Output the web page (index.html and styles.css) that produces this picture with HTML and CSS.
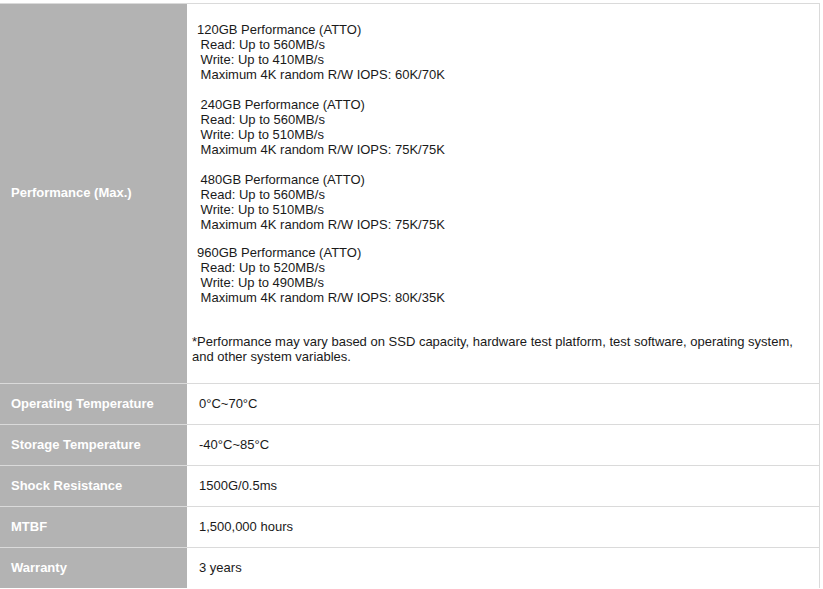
FILE: index.html
```html
<!DOCTYPE html>
<html>
<head>
<meta charset="utf-8">
<title>Specifications</title>
<link rel="stylesheet" href="styles.css">
</head>
<body>
<table class="spec">
  <tr class="perf-row">
    <th class="label">Performance (Max.)</th>
    <td class="perf">
      <div class="group">120GB Performance (ATTO)<br>&nbsp;Read: Up to 560MB/s<br>&nbsp;Write: Up to 410MB/s<br>&nbsp;Maximum 4K random R/W IOPS: 60K/70K</div>
      <div class="group g2">&nbsp;240GB Performance (ATTO)<br>&nbsp;Read: Up to 560MB/s<br>&nbsp;Write: Up to 510MB/s<br>&nbsp;Maximum 4K random R/W IOPS: 75K/75K</div>
      <div class="group g3">&nbsp;480GB Performance (ATTO)<br>&nbsp;Read: Up to 560MB/s<br>&nbsp;Write: Up to 510MB/s<br>&nbsp;Maximum 4K random R/W IOPS: 75K/75K</div>
      <div class="group g4">960GB Performance (ATTO)<br>&nbsp;Read: Up to 520MB/s<br>&nbsp;Write: Up to 490MB/s<br>&nbsp;Maximum 4K random R/W IOPS: 80K/35K</div>
      <p class="note">*Performance may vary based on SSD capacity, hardware test platform, test software, operating system, and other system variables.</p>
    </td>
  </tr>
  <tr>
    <th class="label">Operating Temperature</th>
    <td class="value">0°C~70°C</td>
  </tr>
  <tr>
    <th class="label">Storage Temperature</th>
    <td class="value">-40°C~85°C</td>
  </tr>
  <tr>
    <th class="label">Shock Resistance</th>
    <td class="value">1500G/0.5ms</td>
  </tr>
  <tr>
    <th class="label">MTBF</th>
    <td class="value">1,500,000 hours</td>
  </tr>
  <tr>
    <th class="label">Warranty</th>
    <td class="value">3 years</td>
  </tr>
</table>
</body>
</html>
```
FILE: styles.css
```css
html, body {
  margin: 0;
  padding: 0;
  background: #ffffff;
}

body {
  font-family: "Liberation Sans", Arial, sans-serif;
  font-size: 13px;
  line-height: 15px;
  color: #1a1a1a;
}

.spec {
  margin-top: 3px;
  width: 820px;
  border-collapse: collapse;
  border-right: 1px solid #dadada;
  table-layout: fixed;
}

.spec tr {
  border-top: 1px solid #dadada;
}

.spec .label {
  width: 187px;
  box-sizing: border-box;
  background: #b3b3b3;
  color: #ffffff;
  font-weight: bold;
  text-align: left;
  vertical-align: middle;
  padding: 0 0 2px 11px;
  height: 38px;
}

.spec .value {
  padding: 0 0 2px 12px;
  vertical-align: middle;
  height: 38px;
}

.spec .perf {
  padding: 18px 5px 19px 5px;
  vertical-align: top;
}

.group {
  margin-left: 5px;
}

.g2, .g3 {
  margin-top: 15px;
}

.g4 {
  margin-top: 13px;
}

.note {
  margin: 29px 0 0 0;
}
```
